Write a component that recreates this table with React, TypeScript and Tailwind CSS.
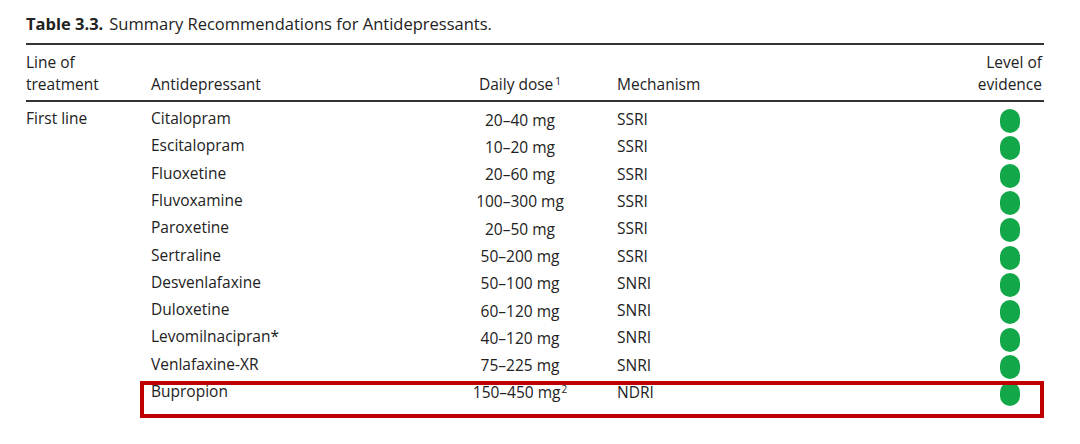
import React from 'react';

const rows = [
  { line: 'First line', drug: 'Citalopram', dose: '20–40 mg', mech: 'SSRI' },
  { line: '', drug: 'Escitalopram', dose: '10–20 mg', mech: 'SSRI' },
  { line: '', drug: 'Fluoxetine', dose: '20–60 mg', mech: 'SSRI' },
  { line: '', drug: 'Fluvoxamine', dose: '100–300 mg', mech: 'SSRI' },
  { line: '', drug: 'Paroxetine', dose: '20–50 mg', mech: 'SSRI' },
  { line: '', drug: 'Sertraline', dose: '50–200 mg', mech: 'SSRI' },
  { line: '', drug: 'Desvenlafaxine', dose: '50–100 mg', mech: 'SNRI' },
  { line: '', drug: 'Duloxetine', dose: '60–120 mg', mech: 'SNRI' },
  { line: '', drug: 'Levomilnacipran*', dose: '40–120 mg', mech: 'SNRI' },
  { line: '', drug: 'Venlafaxine-XR', dose: '75–225 mg', mech: 'SNRI' },
  { line: '', drug: 'Bupropion', dose: '150–450 mg', mech: 'NDRI', sup: '2' },
];

const Dot = () => (
  <span className="block w-[20px] h-[24px] rounded-full bg-[#12a84a]" />
);

const App = () => {
  return (
    <div className="w-[1080px] h-[444px] bg-white text-[#222] font-['Open_Sans','Lato',sans-serif] overflow-hidden">
      <div className="ml-[26px] w-[1018px] pt-[13px]">
        <p className="text-[16.5px] leading-[22px]">
          <span className="font-bold">Table 3.3.</span>
          <span className="ml-[6px]">Summary Recommendations for Antidepressants.</span>
        </p>

        <div className="mt-[8px] border-t-2 border-[#333]" />

        <div className="flex items-end text-[15.5px] leading-[22px] pt-[6px] pb-[5px] border-b-2 border-[#333]">
          <div className="w-[125px]">
            Line of
            <br />
            treatment
          </div>
          <div className="w-[289px]">Antidepressant</div>
          <div className="w-[160px] text-center">
            Daily dose<sup className="text-[10px] ml-[2px]">1</sup>
          </div>
          <div className="w-[17px]" />
          <div className="flex-1">Mechanism</div>
          <div className="text-right pr-[2px]">
            Level of
            <br />
            evidence
          </div>
        </div>

        <div className="relative pt-[3px] text-[15.5px]">
          {rows.map((r) => (
            <div key={r.drug} className="flex items-center h-[27.3px]">
              <div className="w-[125px]">{r.line}</div>
              <div className="w-[289px]">{r.drug}</div>
              <div className="w-[160px] text-center pt-[3px]">
                {r.dose}
                {r.sup && <sup className="text-[10px] ml-[1px]">{r.sup}</sup>}
              </div>
              <div className="w-[17px]" />
              <div className="flex-1 pt-[2px]">{r.mech}</div>
              <div className="w-[44px] flex justify-start pt-[5px]">
                <Dot />
              </div>
            </div>
          ))}
          <div className="absolute left-[114px] right-0 bottom-[-13px] h-[37px] border-4 border-[#c00000]" />
        </div>
      </div>
    </div>
  );
};

export default App;
